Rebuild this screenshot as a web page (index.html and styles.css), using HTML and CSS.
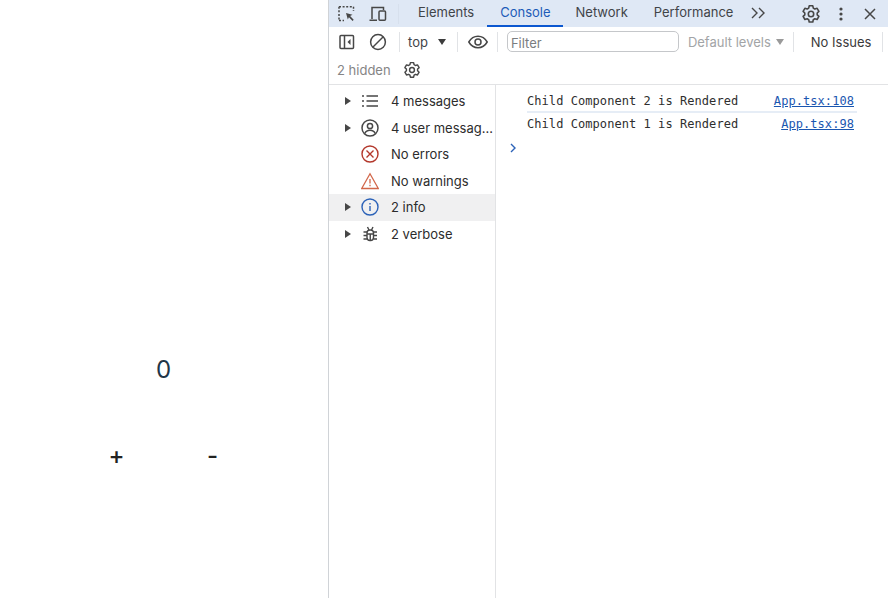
FILE: index.html
```html
<!DOCTYPE html>
<html lang="en">
<head>
<meta charset="utf-8">
<title>Counter with DevTools</title>
<link rel="stylesheet" href="styles.css">
</head>
<body>
<main class="app">
  <div class="count">0</div>
  <div class="buttons">
    <button class="btn">+</button>
    <button class="btn">-</button>
  </div>
</main>
<section class="devtools">
  <header class="tabbar">
    <svg class="ic inspect" width="20" height="20" viewBox="0 0 20 20" fill="none" stroke="#474747" stroke-width="1.5"><path d="M2 2.7h14.5M2 2.7V16.5M16.5 2.7V7M2 16.5h5" stroke-dasharray="2 1.6"/><path d="M9 9l6.5 1.8-2.4 1.2 3.6 3.8-1.1 1.1-3.7-3.7-1.1 2.4z" fill="#474747" stroke="none"/></svg>
    <svg class="ic device" width="20" height="20" viewBox="0 0 20 20" fill="none" stroke="#474747" stroke-width="1.5"><path d="M4 15V3.5h11.5V6M1.5 16.2H9"/><rect x="11" y="7" width="6.5" height="9.2" rx="1"/></svg>
    <span class="vsep tabsep"></span>
    <nav class="tabs">
      <span class="tab">Elements</span>
      <span class="tab active">Console</span>
      <span class="tab">Network</span>
      <span class="tab">Performance</span>
    </nav>
    <svg class="ic more" width="16" height="14" viewBox="0 0 16 14" fill="none" stroke="#474747" stroke-width="1.4"><path d="M2 2l5 5-5 5M9 2l5 5-5 5"/></svg>
    <span class="vsep endsep"></span>
    <svg class="ic gear-top" width="20" height="20" viewBox="0 0 20 20"><use href="#gear"/></svg>
    <svg class="ic dots" width="4" height="14" viewBox="0 0 4 14" fill="#474747"><circle cx="2" cy="2" r="1.6"/><circle cx="2" cy="7" r="1.6"/><circle cx="2" cy="12" r="1.6"/></svg>
    <svg class="ic close" width="12" height="12" viewBox="0 0 12 12" fill="none" stroke="#474747" stroke-width="1.5"><path d="M1 1l10 10M11 1L1 11"/></svg>
  </header>
  <div class="toolbar">
    <svg class="ic" width="18" height="18" viewBox="0 0 18 18" fill="none" stroke="#474747" stroke-width="1.5"><rect x="2" y="2.5" width="13.5" height="13" rx="1"/><path d="M6.5 2.5v13"/><path d="M12.5 6v6l-3-3z" fill="#474747" stroke="none"/></svg>
    <svg class="ic clear" width="18" height="18" viewBox="0 0 18 18" fill="none" stroke="#474747" stroke-width="1.5"><circle cx="9" cy="9" r="7.4"/><path d="M4 14L14 4"/></svg>
    <span class="vsep s1"></span>
    <span class="ctx">top</span>
    <span class="caret"></span>
    <span class="vsep s2"></span>
    <svg class="ic eye" width="20" height="14" viewBox="0 0 20 14" fill="none" stroke="#474747" stroke-width="1.5"><path d="M.8 7C3 3.2 6.2 1.3 10 1.3S17 3.2 19.2 7C17 10.8 13.800 12.700 10 12.700S3 10.800.8 7z"/><circle cx="10" cy="7" r="3"/></svg>
    <span class="vsep s3"></span>
    <div class="filter">Filter</div>
    <span class="levels">Default levels</span>
    <span class="caret gray"></span>
    <span class="vsep s4"></span>
    <span class="issues">No Issues</span>
    <span class="vsep s5"></span>
  </div>
  <div class="statusrow">
    <span class="hidden-count">2 hidden</span>
    <svg class="ic gear-low" width="18" height="18" viewBox="0 0 20 20"><use href="#gear"/></svg>
  </div>
  <div class="body">
    <aside class="sidebar">
      <div class="row"><span class="tri"></span>
        <svg class="ric" width="18" height="18" viewBox="0 0 18 18" fill="none" stroke="#474747" stroke-width="1.5"><path d="M5.500 4H17M5.500 9H17M5.500 14H17"/><path d="M1 4h2M1 9h2M1 14h2"/></svg>
        <span class="lbl">4 messages</span></div>
      <div class="row"><span class="tri"></span>
        <svg class="ric" width="18" height="18" viewBox="0 0 18 18" fill="none" stroke="#474747" stroke-width="1.5"><circle cx="9" cy="9" r="8"/><circle cx="9" cy="7" r="2.600"/><path d="M3.800 14.500c1-2.300 3-3.200 5.200-3.200s4.200.9 5.200 3.200"/></svg>
        <span class="lbl">4 user messag…</span></div>
      <div class="row"><span class="tri none"></span>
        <svg class="ric" width="18" height="18" viewBox="0 0 18 18" fill="none" stroke="#b3382c" stroke-width="1.400"><circle cx="9" cy="9" r="8"/><path d="M5.500 5.500l7 7M12.500 5.500l-7 7"/></svg>
        <span class="lbl">No errors</span></div>
      <div class="row"><span class="tri none"></span>
        <svg class="ric" width="18" height="18" viewBox="0 0 18 18" fill="none" stroke="#d2674a" stroke-width="1.300"><path d="M9 1.800L17.300 16.500H.7z"/><path d="M9 7v4.500M9 12.800v1.400"/></svg>
        <span class="lbl">No warnings</span></div>
      <div class="row selected"><span class="tri"></span>
        <svg class="ric" width="18" height="18" viewBox="0 0 18 18" fill="none" stroke="#2c62b8" stroke-width="1.400"><circle cx="9" cy="9" r="8"/><path d="M9 8v5M9 5v1.500"/></svg>
        <span class="lbl">2 info</span></div>
      <div class="row"><span class="tri"></span>
        <svg class="ric" width="18" height="18" viewBox="0 0 18 18" fill="none" stroke="#474747" stroke-width="1.400"><rect x="6" y="5" width="6.500" height="10.500" rx="3" /><path d="M6.500 2l1.500 3M12 2l-1.500 3M2.500 7h3.500M2.500 10.500H6M2.500 14H6M12.500 7H16M12.500 10.500H16M12.500 14H16M6 9h6.500M9.250 9v6"/></svg>
        <span class="lbl">2 verbose</span></div>
    </aside>
    <div class="console">
      <div class="msg divided"><span class="text">Child Component 2 is Rendered</span><a class="src">App.tsx:108</a></div>
      <div class="msg"><span class="text">Child Component 1 is Rendered</span><a class="src">App.tsx:98</a></div>
      <svg class="prompt" width="8" height="10" viewBox="0 0 8 10" fill="none" stroke="#2c62b8" stroke-width="1.400"><path d="M2 1l4 4-4 4"/></svg>
    </div>
  </div>
</section>
<svg class="defs" width="0" height="0" aria-hidden="true"><defs><g id="gear" fill="none" stroke="#474747" stroke-width="1.600" stroke-linejoin="round"><path d="M8.200 1.800h3.600l.5 2.300 1.500.9 2.300-.7 1.800 3.100-1.700 1.600v1.800l1.700 1.600-1.800 3.100-2.300-.7-1.500.9-.5 2.300H8.200l-.5-2.300-1.500-.9-2.300.7-1.800-3.100 1.700-1.600V9l-1.700-1.600 1.800-3.100 2.300.7 1.500-.9z"/><circle cx="10" cy="10" r="2.700"/></g></defs></svg>
</body>
</html>
```
FILE: styles.css
```css
* { box-sizing: border-box; }
html, body { margin: 0; height: 100%; }
body {
  display: flex;
  width: 888px;
  height: 598px;
  overflow: hidden;
  background: #fff;
  font-family: Inter, "Liberation Sans", sans-serif;
  color: #1f1f1f;
}
.app {
  width: 328px;
  flex: none;
  display: flex;
  flex-direction: column;
  align-items: center;
  padding-top: 354px;
  padding-right: 1px;
}
.count {
  font-size: 24px;
  line-height: 32px;
  color: #213547;
  font-family: Inter, sans-serif;
}
.buttons {
  display: flex;
  gap: 77px;
  margin-top: 54px;
  margin-left: 2px;
}
.btn {
  width: 19px;
  padding: 0;
  border: 0;
  background: none;
  font: 500 24px/32px Inter, sans-serif;
  color: #222;
}
.devtools {
  width: 560px;
  flex: none;
  display: flex;
  flex-direction: column;
  border-left: 1px solid #d0d3d7;
}
.defs { position: absolute; }
.ic { flex: none; display: block; }
.tabbar {
  height: 27px;
  flex: none;
  display: flex;
  align-items: center;
  background: #dfe8f5;
  padding-left: 8px;
}
.device { margin-left: 11px; }
.vsep { flex: none; width: 1px; height: 20px; background: #d3dbe6; }
.tabsep { margin-left: 10px; background: #d7e0ed; }
.tabs { display: flex; height: 27px; margin-left: 6px; }
.tab {
  display: flex;
  align-items: center;
  padding: 0 13px 3px;
  font-size: 13px;
  color: #3f4448;
  white-space: nowrap;
}
.tab.active {
  color: #1d5bb8;
  border-bottom: 2px solid #0b57d0;
  padding: 0 12px 1px 13px;
}
.more { margin-left: 4px; margin-top: -2px; }
.endsep { margin-left: 26px; opacity: 0; }
.gear-top { margin-left: 8px; }
.dots { margin-left: 18px; }
.close { margin-left: 21px; }
.toolbar {
  height: 29px;
  flex: none;
  display: flex;
  align-items: center;
  padding-left: 9px;
}
.toolbar .vsep { background: #e1e3e6; }
.clear { margin-left: 13px; }
.s1 { margin-left: 12px; }
.ctx { margin-left: 8px; font-size: 13px; color: #3f4448; }
.caret {
  width: 0;
  height: 0;
  margin-left: 10px;
  border-left: 4.500px solid transparent;
  border-right: 4.500px solid transparent;
  border-top: 6px solid #3c3c3c;
}
.caret.gray { margin-left: 5px; border-top-color: #9a9a9a; }
.s2 { margin-left: 11px; }
.eye { margin-left: 10px; }
.s3 { margin-left: 9px; }
.filter {
  width: 172px;
  height: 21px;
  margin-left: 9px;
  border: 1px solid #c5c7ca;
  border-radius: 5px;
  padding: 1px 0 0 3px;
  font-size: 13px;
  line-height: 20px;
  color: #7a7d80;
}
.levels { margin-left: 9px; font-size: 13px; color: #a2a4a6; white-space: nowrap; }
.s4 { margin-left: 9px; }
.issues { margin-left: 17px; font-size: 13px; color: #3a3a3a; white-space: nowrap; }
.s5 { margin-left: 11px; }
.statusrow {
  height: 29px;
  flex: none;
  display: flex;
  align-items: center;
  padding-left: 8px;
  border-bottom: 1px solid #e2e3e5;
}
.hidden-count { font-size: 13px; color: #858585; }
.gear-low { margin-left: 12px; }
.body { flex: 1; display: flex; min-height: 0; }
.sidebar {
  width: 167px;
  flex: none;
  border-right: 1px solid #e2e3e5;
  padding-top: 3px;
}
.row {
  height: 26.500px;
  display: flex;
  align-items: center;
  padding-left: 16px;
}
.row.selected { background: #f0f0f1; }
.tri {
  width: 0;
  height: 0;
  flex: none;
  border-top: 4.500px solid transparent;
  border-bottom: 4.500px solid transparent;
  border-left: 6px solid #474747;
}
.tri.none { visibility: hidden; }
.ric { flex: none; margin-left: 9.500px; }
.lbl { margin-left: 12.500px; font-size: 13px; color: #2c2c2c; white-space: nowrap; }
.console { flex: 1; padding-top: 5px; padding-left: 31px; padding-right: 34px; }
.msg {
  height: 22px;
  display: flex;
  justify-content: space-between;
  align-items: center;
  font: 12px/16px "DejaVu Sans Mono", monospace;
}
.msg.divided { height: 23px; border-bottom: 2px solid #e6edf6; margin-right: -3px; padding-right: 3px; }
.text { letter-spacing: .06px; color: #2e2e2e; white-space: pre; }
.src { color: #1a56b0; text-decoration: underline; letter-spacing: .06px; }
.prompt { display: block; margin: 8px 0 0 -18px; }
```
